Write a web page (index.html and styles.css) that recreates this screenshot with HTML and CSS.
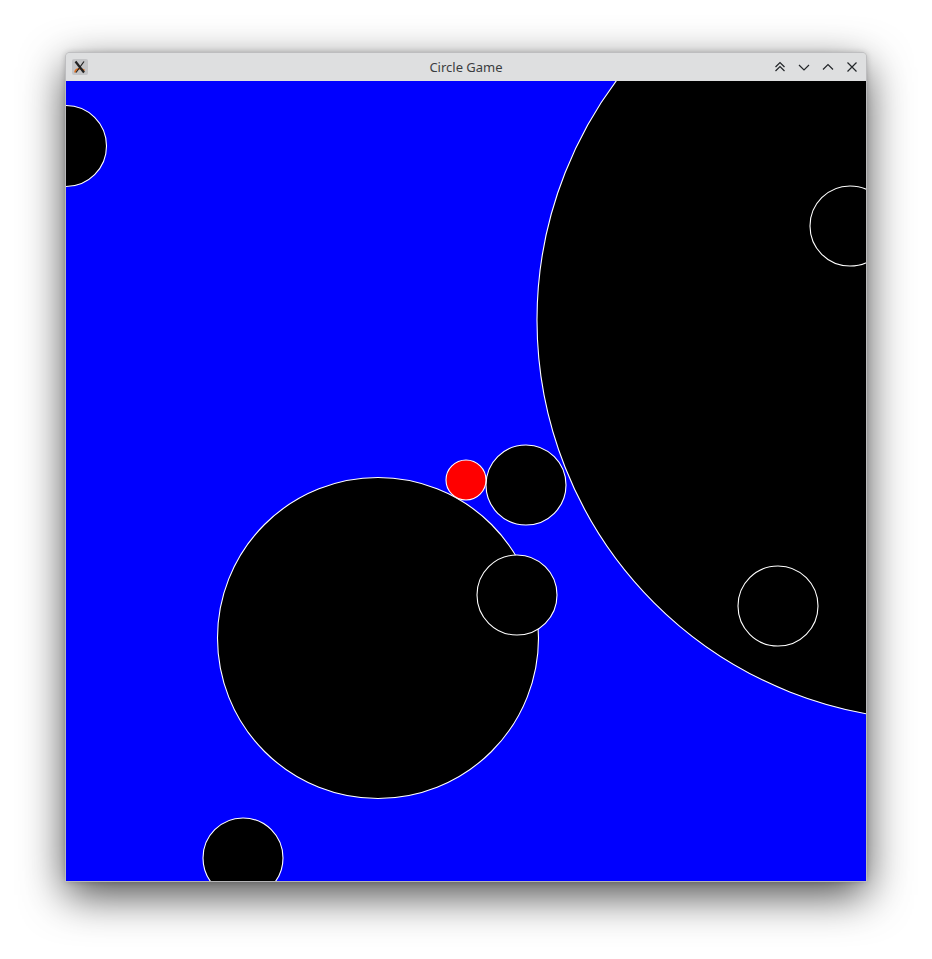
FILE: index.html
```html
<!DOCTYPE html>
<html>
<head>
<meta charset="utf-8">
<link rel="stylesheet" href="styles.css">
</head>
<body>
<div class="page">
  <div class="window">
    <div class="titlebar">
      <div class="left">
        <svg class="app-icon" width="16" height="16" viewBox="0 0 16 16">
          <rect x="0" y="0" width="16" height="16" rx="2" fill="#c4c5c7"/>
          <path d="M3 13.5 C3 10 8 8.5 12.5 11.5" stroke="#e07020" stroke-width="1.6" fill="none"/>
          <path d="M3.5 2.5 L12 13.5" stroke="#222" stroke-width="2.2"/>
          <path d="M12 2.5 L4 13.5" stroke="#222" stroke-width="1.2"/>
        </svg>
      </div>
      <div class="title">Circle Game</div>
      <div class="controls">
        <svg class="ctl" width="16" height="16" viewBox="0 0 16 16"><path d="M3.5 8 L8 3.5 L12.5 8 M3.5 12 L8 7.5 L12.5 12" stroke="#232629" stroke-width="1.2" fill="none"/></svg>
        <svg class="ctl" width="16" height="16" viewBox="0 0 16 16"><path d="M3 6 L8 11 L13 6" stroke="#232629" stroke-width="1.2" fill="none"/></svg>
        <svg class="ctl" width="16" height="16" viewBox="0 0 16 16"><path d="M3 10.5 L8 5.5 L13 10.5" stroke="#232629" stroke-width="1.2" fill="none"/></svg>
        <svg class="ctl" width="16" height="16" viewBox="0 0 16 16"><path d="M3.5 3.5 L12.5 12.5 M12.5 3.5 L3.5 12.5" stroke="#232629" stroke-width="1.2" fill="none"/></svg>
      </div>
    </div>
    <svg class="canvas" width="800" height="800" viewBox="0 0 800 800">
      <rect width="800" height="800" fill="#0000ff"/>
      <g stroke="#ffffff" stroke-width="1.1" fill="#000">
        <circle cx="871" cy="239" r="400"/>
        <circle cx="0" cy="65" r="40.5"/>
        <circle cx="784" cy="145" r="40"/>
        <circle cx="712" cy="525" r="40"/>
        <circle cx="312" cy="557" r="160.5"/>
        <circle cx="460" cy="404" r="40"/>
        <circle cx="451" cy="514" r="40"/>
        <circle cx="177" cy="777" r="40"/>
        <circle cx="400" cy="399" r="20" fill="#ff0000"/>
      </g>
    </svg>
  </div>
</div>
</body>
</html>
```
FILE: styles.css
```css
html, body {
  margin: 0;
  padding: 0;
  background: #ffffff;
}
.page {
  padding: 53px 66px 78px 66px;
  width: 800px;
}
.window {
  width: 800px;
  display: flex;
  flex-direction: column;
  border-radius: 4px 4px 0 0;
  box-shadow: 0 0 0 1px rgba(190, 190, 192, 0.9), 0 14px 44px rgba(0, 0, 0, 0.72), 0 0 6px rgba(0, 0, 0, 0.25);
  background: #dedfe0;
}
.titlebar {
  height: 28px;
  display: grid;
  grid-template-columns: 1fr auto 1fr;
  align-items: center;
  background: #dedfe0;
  border-radius: 4px 4px 0 0;
}
.left {
  display: flex;
  padding-left: 6px;
}
.app-icon {
  display: block;
}
.title {
  text-align: center;
  font-family: "Noto Sans", sans-serif;
  font-size: 13px;
  color: #3b3d3f;
}
.controls {
  display: flex;
  justify-content: flex-end;
  gap: 8px;
  padding-right: 6px;
}
.ctl {
  display: block;
}
.canvas {
  display: block;
}
```
